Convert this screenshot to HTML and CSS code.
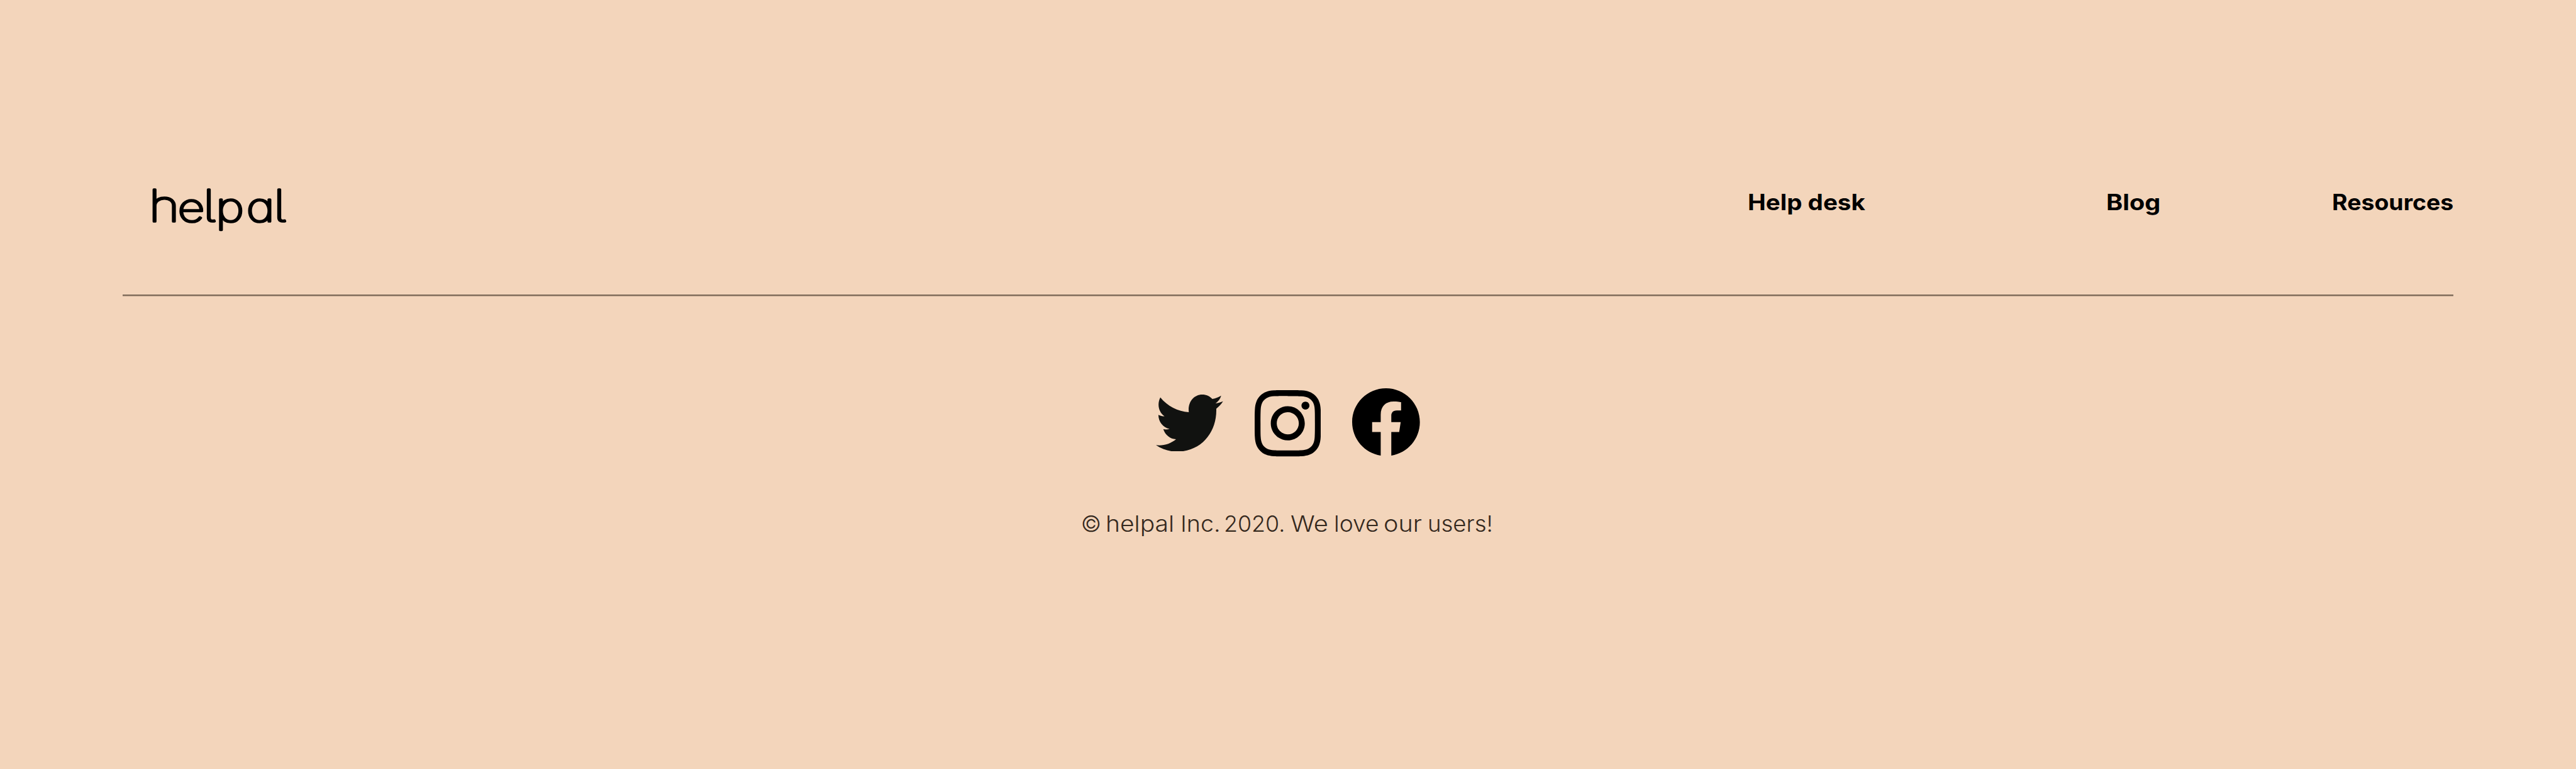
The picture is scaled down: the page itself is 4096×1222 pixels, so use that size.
FILE: index.html
```html
<!DOCTYPE html>
<html lang="en">
<head>
<meta charset="utf-8">
<title>helpal</title>
<link rel="stylesheet" href="styles.css">
</head>
<body>
<footer class="footer">
  <div class="footer-top">
    <a class="brand">
      <svg class="brand-mark" viewBox="0 0 220 90" role="img" aria-label="helpal">
        <text class="brand-text" transform="translate(4.7 62) scale(1.2 1)" y="0"><tspan class="tall" x="-4.9">h</tspan><tspan x="33.4">e</tspan><tspan class="tall" x="66.9">l</tspan><tspan class="round" x="83.6">p</tspan><tspan class="round" x="124.2">a</tspan><tspan class="tall" x="160.2">l</tspan></text>
      </svg>
    </a>
    <nav class="links">
      <a class="link link-help">Help desk</a>
      <a class="link link-blog">Blog</a>
      <a class="link link-resources">Resources</a>
    </nav>
  </div>
  <div class="rule"></div>
  <div class="social">
    <svg class="icon-twitter" viewBox="67 123 547 465" aria-label="Twitter">
      <path d="M103 146C160 216 245 262 335 266C325 190 372 123 445 123C477 123 505 136 527 159C552 155 577 146 599 132C591 158 575 180 553 195C575 192 595 186 614 178C600 200 581 221 559 238C566 420 445 588 239 588C178 588 118 570 67 535C130 542 186 524 231 487C183 485 143 453 127 405C144 409 161 408 178 403C125 392 88 345 87 288C103 296 119 300 137 300C88 266 75 200 103 146Z"/>
    </svg>
    <svg class="icon-instagram" viewBox="0 0 24 24" aria-label="Instagram">
      <path d="M12 0C8.74 0 8.333.015 7.053.072 5.775.132 4.905.333 4.14.63c-.789.306-1.459.717-2.126 1.384S.935 3.35.63 4.14C.333 4.905.131 5.775.072 7.053.012 8.333 0 8.74 0 12s.015 3.667.072 4.947c.06 1.277.261 2.148.558 2.913.306.788.717 1.459 1.384 2.126.667.666 1.336 1.079 2.126 1.384.766.296 1.636.499 2.913.558C8.333 23.988 8.74 24 12 24s3.667-.015 4.947-.072c1.277-.06 2.148-.262 2.913-.558.788-.306 1.459-.718 2.126-1.384.666-.667 1.079-1.335 1.384-2.126.296-.765.499-1.636.558-2.913.06-1.28.072-1.687.072-4.947s-.015-3.667-.072-4.947c-.06-1.277-.262-2.149-.558-2.913-.306-.789-.718-1.459-1.384-2.126C21.319 1.347 20.651.935 19.86.63c-.765-.297-1.636-.499-2.913-.558C15.667.012 15.26 0 12 0zm0 2.16c3.203 0 3.585.016 4.85.071 1.17.055 1.805.249 2.227.415.562.217.96.477 1.382.896.419.42.679.819.896 1.381.164.422.36 1.057.413 2.227.057 1.266.07 1.646.07 4.85s-.015 3.585-.074 4.85c-.061 1.17-.256 1.805-.421 2.227-.224.562-.479.96-.899 1.382-.419.419-.824.679-1.38.896-.42.164-1.065.36-2.235.413-1.274.057-1.649.07-4.859.07-3.211 0-3.586-.015-4.859-.074-1.171-.061-1.816-.256-2.236-.421-.569-.224-.96-.479-1.379-.899-.421-.419-.69-.824-.9-1.38-.165-.42-.359-1.065-.42-2.235-.045-1.26-.061-1.649-.061-4.844 0-3.196.016-3.586.061-4.861.061-1.17.255-1.814.42-2.234.21-.57.479-.96.9-1.381.419-.419.81-.689 1.379-.898.42-.166 1.051-.361 2.221-.421 1.275-.045 1.65-.06 4.859-.06l.045.03zm0 3.678c-3.405 0-6.162 2.76-6.162 6.162 0 3.405 2.76 6.162 6.162 6.162 3.405 0 6.162-2.76 6.162-6.162 0-3.405-2.76-6.162-6.162-6.162zM12 16c-2.21 0-4-1.79-4-4s1.79-4 4-4 4 1.79 4 4-1.79 4-4 4zm7.846-10.405c0 .795-.646 1.44-1.44 1.44-.795 0-1.44-.646-1.44-1.44 0-.794.646-1.439 1.44-1.439.793-.001 1.44.645 1.44 1.439z"/>
    </svg>
    <svg class="icon-facebook" viewBox="0 .073 24 23.854" aria-label="Facebook">
      <path d="M24 12.073c0-6.627-5.373-12-12-12s-12 5.373-12 12c0 5.99 4.388 10.954 10.125 11.854v-8.385H7.078v-3.47h3.047V9.43c0-3.007 1.792-4.669 4.533-4.669 1.312 0 2.686.235 2.686.235v2.953H15.83c-1.491 0-1.956.925-1.956 1.874v2.25h3.328l-.532 3.47h-2.796v8.385C19.612 23.027 24 18.062 24 12.073z"/>
    </svg>
  </div>
  <p class="copyright">
    <span>©</span>
    <span class="w-helpal">helpal</span>
    <span class="w-inc">Inc.</span>
    <span class="w-year">2020.</span>
    <span class="w-we">We</span>
    <span class="w-love">love</span>
    <span class="w-our">our</span>
    <span class="w-users">users!</span>
  </p>
</footer>
</body>
</html>
```

FILE: styles.css
```css
* {
  box-sizing: border-box;
}

body {
  margin: 0;
  background: #f3d5bb;
  color: #000;
  font-family: Inter, "Open Sans", sans-serif;
}

.footer {
  height: 1222px;
  padding: 0 195px;
  overflow: hidden;
}

.footer-top {
  display: flex;
  justify-content: space-between;
  height: 468px;
}

.brand {
  margin: 290px 0 0 43px;
}

.brand-mark {
  display: block;
  width: 220px;
  height: 90px;
  overflow: visible;
}

.brand-text {
  font-size: 62px;
  font-weight: 100;
  font-feature-settings: "cv11", "cv05";
  fill: #000;
  stroke: #000;
  stroke-width: 3.7px;
  stroke-linejoin: round;
  stroke-linecap: round;
}

.brand-text .tall {
  font-size: 69.5px;
}

.brand-text .round {
  font-size: 64.5px;
}

.links {
  display: grid;
  grid-template-columns: 570.3px 359.3px 192.7px;
  align-content: start;
  margin-top: 299px;
}

.link {
  justify-self: start;
  font-size: 35.2px;
  font-weight: 700;
  line-height: 44px;
  white-space: nowrap;
  transform-origin: left;
}

.link-help {
  transform: scaleX(1.095);
}

.link-blog {
  transform: scaleX(1.128);
}

.link-resources {
  transform: scaleX(1.064);
}

.rule {
  height: 3px;
  background: linear-gradient(#7f6b5a 2px, #b9a08a 2px);
}

.social {
  display: flex;
  justify-content: center;
  align-items: flex-start;
  gap: 50px;
  padding-top: 146px;
  height: 340px;
}

.icon-twitter {
  width: 106.7px;
  height: 90.7px;
  margin-top: 9.7px;
  fill: #111210;
}

.icon-instagram {
  width: 105.3px;
  height: 105.3px;
  margin-top: 3.3px;
}

.icon-facebook {
  width: 107.7px;
  height: 107px;
}

.copyright {
  display: grid;
  grid-template-columns: 39.7px 118.7px 69.3px 105.5px 68.7px 79.4px 70.4px 103.6px;
  justify-items: start;
  margin: 0 0 0 1523.7px;
  color: #35291e;
  font-size: 35.3px;
  font-weight: 350;
  line-height: 44px;
  white-space: nowrap;
}

.copyright span {
  transform-origin: left;
}

.w-helpal {
  transform: scaleX(1.105);
}

.w-inc {
  transform: scaleX(1.065);
}

.w-year {
  transform: scaleX(1.015);
}

.w-we {
  transform: scaleX(1.135);
}

.w-love {
  transform: scaleX(1.055);
}

.w-our {
  transform: scaleX(1.12);
}

.w-users {
  transform: scaleX(1.035);
}
```
